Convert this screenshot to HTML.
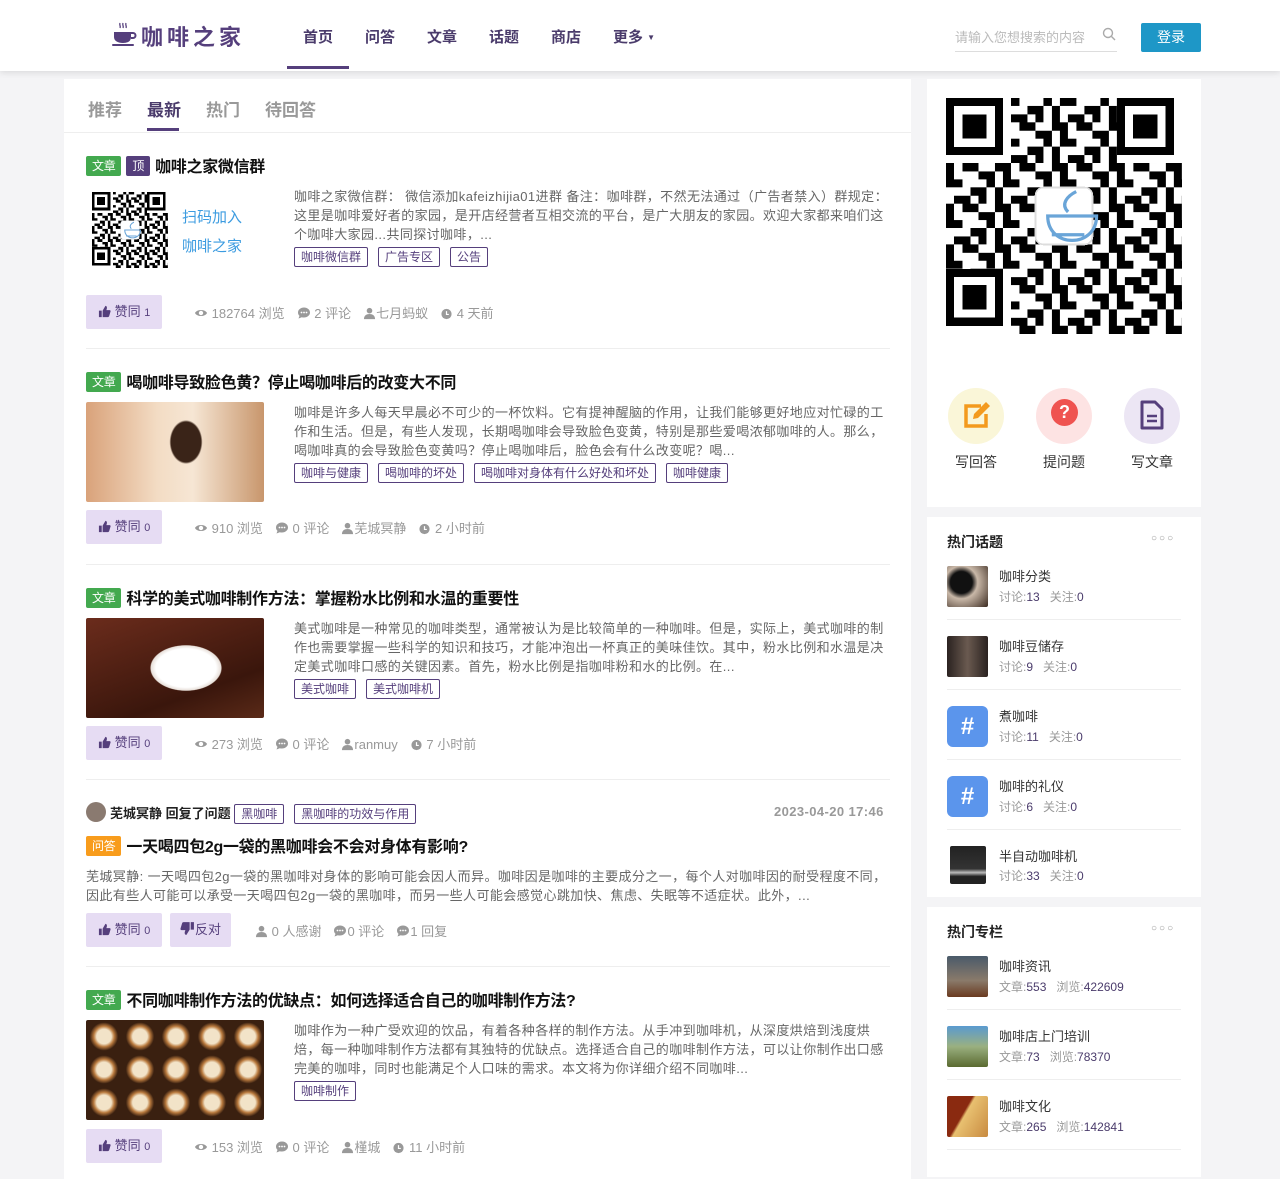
<!DOCTYPE html>
<html><head><meta charset="utf-8"><style>
*{margin:0;padding:0;box-sizing:border-box}
body{width:1280px;height:1167px;background:#f4f4f6;font-family:"Liberation Sans","Noto Sans CJK SC",sans-serif;color:#333;position:relative;overflow:hidden;font-size:13px}
.a{position:absolute}
.hdr{left:0;top:0;width:1280px;height:71px;background:#fff;box-shadow:0 2px 6px rgba(0,0,0,.1)}
.nav{font-size:15px;font-weight:bold;color:#4a3b6b;top:26px}
.card{background:#fff}
.tag{display:inline-block;border:1px solid #553f7c;color:#553f7c;font-size:12px;padding:0 6px;height:20px;line-height:18px;border-radius:2px;margin-right:10px}
.lbl{display:inline-block;color:#fff;font-size:12px;font-weight:normal;height:20px;line-height:20px;padding:0 6px;border-radius:2px;vertical-align:2px;margin-right:5px}
.g{background:#43a94f}.p{background:#553f7c}.o{background:#f89c1c}
.ttl{font-size:16px;font-weight:bold;color:#111;left:86px;letter-spacing:-0.3px}
.txt{font-size:13px;line-height:19px;color:#666;letter-spacing:0.4px}
.btn{background:#e6dcf3;color:#553f7c;font-size:13px;height:34px;line-height:34px;padding:0 12px;border-radius:2px}
.btn svg,.meta svg{vertical-align:-2px}
.meta{font-size:13px;color:#999}
.meta span{margin-right:12px}
.sep{left:86px;width:804px;height:1px;background:#eee}
.img{border-radius:2px}
.sb{font-size:13px;color:#333}
.sm{font-size:12px;color:#999}
.sm b{font-weight:normal;color:#4a3b6b}
.hl{left:947px;width:234px;height:1px;background:#eee}
.dots{color:#999;font-size:10px;letter-spacing:2px}
</style></head><body>
<svg width="0" height="0" style="position:absolute"><defs>
<symbol id="th" viewBox="0 0 14 14"><path d="M1 6h3v7H1zM5 6l3-5c1 0 2 1 1.5 3L9 5.5h3.5c.8 0 1.3.8 1 1.5l-1.5 5c-.2.6-.7 1-1.3 1H5z" fill="#553f7c"/></symbol>
<symbol id="eye" viewBox="0 0 14 14"><path d="M1 7c2-4 10-4 12 0-2 4-10 4-12 0z" fill="#999"/><circle cx="7" cy="7" r="2.2" fill="#fff"/></symbol>
<symbol id="cm" viewBox="0 0 14 14"><path d="M7 1.5c3.3 0 6 2.2 6 5s-2.7 5-6 5c-.8 0-1.5-.1-2.2-.3L1.5 12.5l1-2.6C1.5 9 1 7.8 1 6.5c0-2.8 2.7-5 6-5z" fill="#999"/><circle cx="4.5" cy="6.5" r=".9" fill="#fff"/><circle cx="7" cy="6.5" r=".9" fill="#fff"/><circle cx="9.5" cy="6.5" r=".9" fill="#fff"/></symbol>
<symbol id="us" viewBox="0 0 14 14"><circle cx="7" cy="4" r="3" fill="#999"/><path d="M1 13c0-4 3-5.5 6-5.5s6 1.5 6 5.5z" fill="#999"/></symbol>
<symbol id="ck" viewBox="0 0 14 14"><circle cx="7" cy="7.5" r="5.5" fill="#999"/><path d="M7 4.5v3.5h2.5" stroke="#fff" stroke-width="1.3" fill="none"/></symbol>
</defs></svg>
<div class="a hdr"></div>
<svg class="a" style="left:111px;top:21px" width="26" height="27" viewBox="0 0 26 27"><path d="M9 2c-1 2 1 3 0 5M12 2c-1 2 1 3 0 5M15 2c-1 2 1 3 0 5" stroke="#553f7c" stroke-width="1.3" fill="none"/><path d="M3 11h17v5c0 4-3 6-8 6s-9-2-9-6z" fill="#553f7c"/><path d="M20 12h2a2 2 0 010 5h-2" stroke="#553f7c" stroke-width="2" fill="none"/><rect x="1" y="23" width="22" height="2" rx="1" fill="#553f7c"/></svg>
<div class="a" style="left:141px;top:20px;font-size:22px;font-weight:bold;color:#553f7c;letter-spacing:4px">咖啡之家</div>
<div class="a nav" style="left:303px">首页</div>
<div class="a" style="left:287px;top:66px;width:62px;height:3px;background:#553f7c"></div>
<div class="a nav" style="left:365px">问答</div>
<div class="a nav" style="left:427px">文章</div>
<div class="a nav" style="left:489px">话题</div>
<div class="a nav" style="left:551px">商店</div>
<div class="a nav" style="left:613px">更多 <span style="font-size:8px;vertical-align:2px">▼</span></div>
<div class="a" style="left:955px;top:27px;font-size:13px;color:#bbb">请输入您想搜索的内容</div>
<svg class="a" style="left:1102px;top:27px" width="14" height="14" viewBox="0 0 14 14"><circle cx="6" cy="6" r="4.5" stroke="#aaa" stroke-width="1.4" fill="none"/><path d="M9.5 9.5l3.5 3.5" stroke="#aaa" stroke-width="1.4"/></svg>
<div class="a" style="left:955px;top:51px;width:162px;height:1px;background:#ddd"></div>
<div class="a" style="left:1141px;top:23px;width:60px;height:29px;background:#1e97c7;color:#fff;font-size:14px;line-height:29px;text-align:center;border-radius:2px">登录</div>

<div class="a card" style="left:64px;top:79px;width:847px;height:1100px"></div>
<div class="a" style="left:88px;top:96px;font-size:17px;color:#999;font-weight:bold">推荐</div>
<div class="a" style="left:147px;top:96px;font-size:17px;color:#4a3b6b;font-weight:bold">最新</div>
<div class="a" style="left:147px;top:128px;width:32px;height:3px;background:#553f7c"></div>
<div class="a" style="left:206px;top:96px;font-size:17px;color:#999;font-weight:bold">热门</div>
<div class="a" style="left:265px;top:96px;font-size:17px;color:#999;font-weight:bold">待回答</div>
<div class="a" style="left:64px;top:132px;width:847px;height:1px;background:#eee"></div>

<!-- post 1 -->
<div class="a ttl" style="top:153px"><span class="lbl g">文章</span><span class="lbl p">顶</span>咖啡之家微信群</div>
<svg class="a" style="left:92px;top:192px" width="76" height="76" viewBox="0 0 29 29" shape-rendering="crispEdges"><use href="#qr"/></svg>
<div class="a" style="left:182px;top:203px;font-size:15px;color:#3b9be0;line-height:29px">扫码加入<br>咖啡之家</div>
<div class="a txt" style="left:294px;top:187px;width:594px">咖啡之家微信群： 微信添加kafeizhijia01进群 备注：咖啡群，不然无法通过（广告者禁入）群规定：这里是咖啡爱好者的家园，是开店经营者互相交流的平台，是广大朋友的家园。欢迎大家都来咱们这个咖啡大家园...共同探讨咖啡，...</div>
<div class="a" style="left:294px;top:247px"><span class="tag">咖啡微信群</span><span class="tag">广告专区</span><span class="tag">公告</span></div>
<div class="a btn" style="left:86px;top:295px"><svg width="13" height="13"><use href="#th"/></svg> 赞同 <small>1</small></div>
<div class="a meta" style="left:194px;top:303px"><span><svg width="14" height="14"><use href="#eye"/></svg> 182764 浏览</span><span><svg width="14" height="14"><use href="#cm"/></svg> 2 评论</span><span><svg width="13" height="13"><use href="#us"/></svg>七月蚂蚁</span><span><svg width="13" height="13"><use href="#ck"/></svg> 4 天前</span></div>
<div class="a sep" style="top:348px"></div>

<!-- post 2 -->
<div class="a ttl" style="top:369px"><span class="lbl g">文章</span>喝咖啡导致脸色黄？停止喝咖啡后的改变大不同</div>
<div class="a img" style="left:86px;top:402px;width:178px;height:100px;background:radial-gradient(ellipse 30px 40px at 100px 40px,#3a2418 50%,transparent 55%),linear-gradient(90deg,#d9a27a,#f3dcc4 40%,#f6e6d4 60%,#c8966c)"></div>
<div class="a txt" style="left:294px;top:403px;width:594px">咖啡是许多人每天早晨必不可少的一杯饮料。它有提神醒脑的作用，让我们能够更好地应对忙碌的工作和生活。但是，有些人发现，长期喝咖啡会导致脸色变黄，特别是那些爱喝浓郁咖啡的人。那么，喝咖啡真的会导致脸色变黄吗？停止喝咖啡后，脸色会有什么改变呢？喝...</div>
<div class="a" style="left:294px;top:463px"><span class="tag">咖啡与健康</span><span class="tag">喝咖啡的坏处</span><span class="tag">喝咖啡对身体有什么好处和坏处</span><span class="tag">咖啡健康</span></div>
<div class="a btn" style="left:86px;top:510px"><svg width="13" height="13"><use href="#th"/></svg> 赞同 <small>0</small></div>
<div class="a meta" style="left:194px;top:518px"><span><svg width="14" height="14"><use href="#eye"/></svg> 910 浏览</span><span><svg width="14" height="14"><use href="#cm"/></svg> 0 评论</span><span><svg width="13" height="13"><use href="#us"/></svg>芜城冥静</span><span><svg width="13" height="13"><use href="#ck"/></svg> 2 小时前</span></div>
<div class="a sep" style="top:564px"></div>

<!-- post 3 -->
<div class="a ttl" style="top:585px"><span class="lbl g">文章</span>科学的美式咖啡制作方法：掌握粉水比例和水温的重要性</div>
<div class="a img" style="left:86px;top:618px;width:178px;height:100px;background:radial-gradient(ellipse 50px 32px at 100px 50px,#fff 60%,#e8e0da 70%,transparent 72%),linear-gradient(160deg,#6b2c1c,#3a160c 70%,#5a2a18)"></div>
<div class="a txt" style="left:294px;top:619px;width:594px">美式咖啡是一种常见的咖啡类型，通常被认为是比较简单的一种咖啡。但是，实际上，美式咖啡的制作也需要掌握一些科学的知识和技巧，才能冲泡出一杯真正的美味佳饮。其中，粉水比例和水温是决定美式咖啡口感的关键因素。首先，粉水比例是指咖啡粉和水的比例。在...</div>
<div class="a" style="left:294px;top:679px"><span class="tag">美式咖啡</span><span class="tag">美式咖啡机</span></div>
<div class="a btn" style="left:86px;top:726px"><svg width="13" height="13"><use href="#th"/></svg> 赞同 <small>0</small></div>
<div class="a meta" style="left:194px;top:734px"><span><svg width="14" height="14"><use href="#eye"/></svg> 273 浏览</span><span><svg width="14" height="14"><use href="#cm"/></svg> 0 评论</span><span><svg width="13" height="13"><use href="#us"/></svg>ranmuy</span><span><svg width="13" height="13"><use href="#ck"/></svg> 7 小时前</span></div>
<div class="a sep" style="top:779px"></div>

<!-- Q -->
<div class="a" style="left:86px;top:802px;width:20px;height:20px;border-radius:50%;background:#8a7a70"></div>
<div class="a" style="left:110px;top:803px;font-size:13px;font-weight:bold;color:#222">芜城冥静 回复了问题 <span class="tag" style="font-weight:normal">黑咖啡</span><span class="tag" style="font-weight:normal">黑咖啡的功效与作用</span></div>
<div class="a" style="left:774px;top:804px;font-size:13px;font-weight:bold;color:#999;letter-spacing:.4px">2023-04-20 17:46</div>
<div class="a ttl" style="top:833px"><span class="lbl o">问答</span>一天喝四包2g一袋的黑咖啡会不会对身体有影响?</div>
<div class="a txt" style="left:86px;top:867px;width:804px">芜城冥静: 一天喝四包2g一袋的黑咖啡对身体的影响可能会因人而异。咖啡因是咖啡的主要成分之一，每个人对咖啡因的耐受程度不同，因此有些人可能可以承受一天喝四包2g一袋的黑咖啡，而另一些人可能会感觉心跳加快、焦虑、失眠等不适症状。此外，...</div>
<div class="a btn" style="left:86px;top:913px"><svg width="13" height="13"><use href="#th"/></svg> 赞同 <small>0</small></div>
<div class="a btn" style="left:170px;top:913px;padding:0 10px"><svg width="15" height="15" style="transform:rotate(180deg)"><use href="#th"/></svg>反对</div>
<div class="a meta" style="left:255px;top:921px"><span><svg width="13" height="13"><use href="#us"/></svg> 0 人感谢</span><span><svg width="14" height="14"><use href="#cm"/></svg>0 评论</span><span><svg width="14" height="14"><use href="#cm"/></svg>1 回复</span></div>
<div class="a sep" style="top:966px"></div>

<!-- post 5 -->
<div class="a ttl" style="top:987px"><span class="lbl g">文章</span>不同咖啡制作方法的优缺点：如何选择适合自己的咖啡制作方法?</div>
<div class="a img" style="left:86px;top:1020px;width:178px;height:100px;background:radial-gradient(circle at 50% 50%,#f2e3c8 30%,#b97a3e 42%,#3a2010 58%) 0 0/36px 33px"></div>
<div class="a txt" style="left:294px;top:1021px;width:594px">咖啡作为一种广受欢迎的饮品，有着各种各样的制作方法。从手冲到咖啡机，从深度烘焙到浅度烘焙，每一种咖啡制作方法都有其独特的优缺点。选择适合自己的咖啡制作方法，可以让你制作出口感完美的咖啡，同时也能满足个人口味的需求。本文将为你详细介绍不同咖啡...</div>
<div class="a" style="left:294px;top:1081px"><span class="tag">咖啡制作</span></div>
<div class="a btn" style="left:86px;top:1129px"><svg width="13" height="13"><use href="#th"/></svg> 赞同 <small>0</small></div>
<div class="a meta" style="left:194px;top:1137px"><span><svg width="14" height="14"><use href="#eye"/></svg> 153 浏览</span><span><svg width="14" height="14"><use href="#cm"/></svg> 0 评论</span><span><svg width="13" height="13"><use href="#us"/></svg>槿城</span><span><svg width="13" height="13"><use href="#ck"/></svg> 11 小时前</span></div>

<!-- sidebar -->
<div class="a card" style="left:927px;top:79px;width:274px;height:428px"></div>
<svg class="a" style="left:946px;top:98px" width="236" height="236" viewBox="0 0 29 29" shape-rendering="crispEdges">
<defs><pattern id="pt" patternUnits="userSpaceOnUse" width="7" height="5"><rect x="0" y="0" width="2" height="1"/><rect x="3" y="1" width="2" height="1"/><rect x="2" y="2" width="1" height="2"/><rect x="0" y="3" width="1" height="2"/><rect x="4" y="2" width="1" height="1"/><rect x="1" y="2" width="1" height="1"/><rect x="5" y="0" width="1" height="1"/><rect x="6" y="1" width="1" height="3"/><rect x="4" y="4" width="2" height="1"/><rect x="3" y="3" width="1" height="1"/></pattern>
<g id="qr"><rect width="29" height="29" fill="#fff"/><rect width="29" height="29" fill="url(#pt)"/><g fill="#fff"><rect x="0" y="0" width="8" height="8"/><rect x="21" y="0" width="8" height="8"/><rect x="0" y="21" width="8" height="8"/></g><g fill="none" stroke="#000"><rect x=".5" y=".5" width="6" height="6"/><rect x="21.5" y=".5" width="6" height="6"/><rect x=".5" y="21.5" width="6" height="6"/></g><rect x="2" y="2" width="3" height="3"/><rect x="23" y="2" width="3" height="3"/><rect x="2" y="23" width="3" height="3"/><rect x="11" y="11" width="7" height="7" rx="1" fill="#fff" stroke="#ddd" stroke-width=".2"/><path d="M12.5 14.5c0 2 1.5 3 3 3s3-1 3-3zM13 16.8h4M15 14c-1-1 0-2 1-2.5" stroke="#6aa5d8" stroke-width=".4" fill="none" shape-rendering="auto"/></g></defs><use href="#qr"/></svg>
<div class="a" style="left:948px;top:388px;width:56px;height:56px;border-radius:50%;background:#faf6d8"></div>
<svg class="a" style="left:961px;top:400px" width="32" height="32" viewBox="0 0 32 32"><path d="M20 6H5v20h20V14" stroke="#f39a1e" stroke-width="3.5" fill="none"/><path d="M12 19l1-5 12-12 4 4-12 12z" fill="#f39a1e"/></svg>
<div class="a" style="left:1036px;top:388px;width:56px;height:56px;border-radius:50%;background:#fde3e3"></div>
<div class="a" style="left:1051px;top:399px;width:27px;height:27px;border-radius:50%;background:#ef5350;color:#fff;font-weight:bold;font-size:18px;text-align:center;line-height:27px">?</div>
<div class="a" style="left:1124px;top:388px;width:56px;height:56px;border-radius:50%;background:#ece6f4"></div>
<svg class="a" style="left:1140px;top:400px" width="24" height="30" viewBox="0 0 24 30"><path d="M2 2h13l7 7v19H2z" stroke="#553f7c" stroke-width="3" fill="none" stroke-linejoin="round"/><path d="M7 16h10M7 21h10" stroke="#553f7c" stroke-width="2.5"/></svg>
<div class="a sb" style="left:955px;top:452px;font-size:14px">写回答</div>
<div class="a sb" style="left:1043px;top:452px;font-size:14px">提问题</div>
<div class="a sb" style="left:1131px;top:452px;font-size:14px">写文章</div>

<div class="a card" style="left:927px;top:517px;width:274px;height:380px"></div>
<div class="a" style="left:947px;top:532px;font-size:14px;font-weight:bold;color:#222">热门话题</div>
<div class="a dots" style="left:1151px;top:533px">○○○</div>
<div class="a img" style="left:947px;top:566px;width:41px;height:41px;background:radial-gradient(circle at 35% 40%,#111 30%,#c9b8a8 45%,#3a2a20)"></div>
<div class="a sb" style="left:999px;top:566px">咖啡分类</div><div class="a sm" style="left:999px;top:588px">讨论:<b>13</b> &nbsp; 关注:<b>0</b></div>
<div class="a hl" style="top:619px"></div>
<div class="a img" style="left:947px;top:636px;width:41px;height:41px;background:linear-gradient(90deg,#2a2220,#6a5a50,#2a2220)"></div>
<div class="a sb" style="left:999px;top:636px">咖啡豆储存</div><div class="a sm" style="left:999px;top:658px">讨论:<b>9</b> &nbsp; 关注:<b>0</b></div>
<div class="a hl" style="top:689px"></div>
<div class="a img" style="left:947px;top:706px;width:41px;height:41px;background:#5b95ec;border-radius:6px;color:#fff;font-weight:bold;font-size:24px;text-align:center;line-height:41px">#</div>
<div class="a sb" style="left:999px;top:706px">煮咖啡</div><div class="a sm" style="left:999px;top:728px">讨论:<b>11</b> &nbsp; 关注:<b>0</b></div>
<div class="a hl" style="top:759px"></div>
<div class="a img" style="left:947px;top:776px;width:41px;height:41px;background:#5b95ec;border-radius:6px;color:#fff;font-weight:bold;font-size:24px;text-align:center;line-height:41px">#</div>
<div class="a sb" style="left:999px;top:776px">咖啡的礼仪</div><div class="a sm" style="left:999px;top:798px">讨论:<b>6</b> &nbsp; 关注:<b>0</b></div>
<div class="a hl" style="top:829px"></div>
<div class="a img" style="left:950px;top:846px;width:36px;height:38px;background:linear-gradient(180deg,#222 0,#333 60%,#bbb 70%,#222 80%)"></div>
<div class="a sb" style="left:999px;top:846px">半自动咖啡机</div><div class="a sm" style="left:999px;top:867px">讨论:<b>33</b> &nbsp; 关注:<b>0</b></div>

<div class="a card" style="left:927px;top:907px;width:274px;height:270px"></div>
<div class="a" style="left:947px;top:922px;font-size:14px;font-weight:bold;color:#222">热门专栏</div>
<div class="a dots" style="left:1151px;top:923px">○○○</div>
<div class="a img" style="left:947px;top:956px;width:41px;height:41px;background:linear-gradient(180deg,#4a5a6a,#8a7a6a 60%,#6a3a20)"></div>
<div class="a sb" style="left:999px;top:956px">咖啡资讯</div><div class="a sm" style="left:999px;top:978px">文章:<b>553</b> &nbsp; 浏览:<b>422609</b></div>
<div class="a hl" style="top:1009px"></div>
<div class="a img" style="left:947px;top:1026px;width:41px;height:41px;background:linear-gradient(180deg,#5a9ad0,#9ab080 50%,#5a6a30)"></div>
<div class="a sb" style="left:999px;top:1026px">咖啡店上门培训</div><div class="a sm" style="left:999px;top:1048px">文章:<b>73</b> &nbsp; 浏览:<b>78370</b></div>
<div class="a hl" style="top:1079px"></div>
<div class="a img" style="left:947px;top:1096px;width:41px;height:41px;background:linear-gradient(120deg,#8a2a10 40%,#e8c070 45%,#c88a40)"></div>
<div class="a sb" style="left:999px;top:1096px">咖啡文化</div><div class="a sm" style="left:999px;top:1118px">文章:<b>265</b> &nbsp; 浏览:<b>142841</b></div>
<div class="a hl" style="top:1149px"></div>
</body></html>
